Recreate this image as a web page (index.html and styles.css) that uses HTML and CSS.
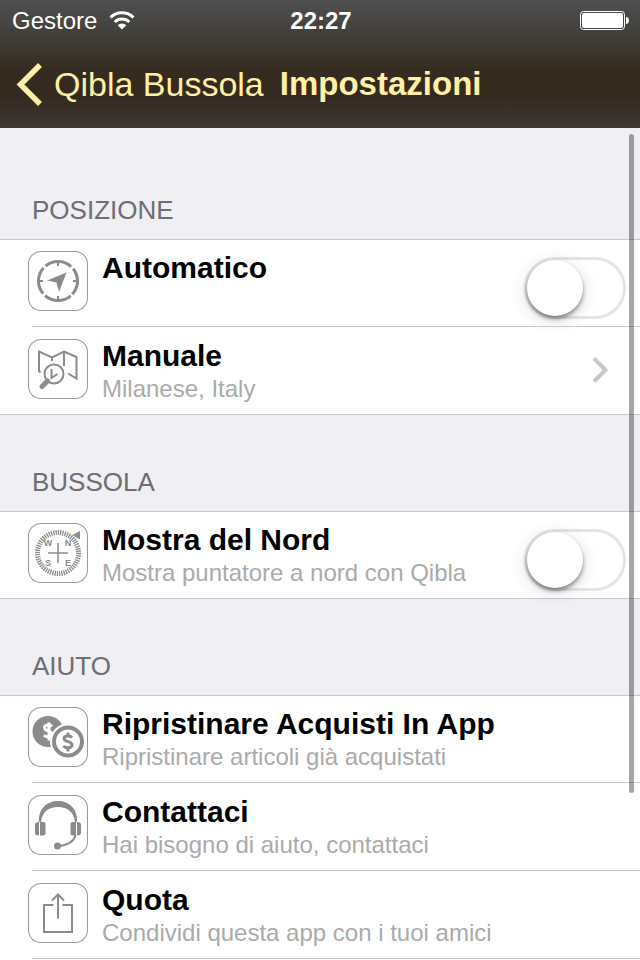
FILE: index.html
```html
<!DOCTYPE html>
<html lang="it">
<head>
    <meta charset="UTF-8">
    <meta name="viewport" content="width=device-width, initial-scale=1.0">
    <title>Impostazioni</title>
    <link rel="stylesheet" href="styles.css">
</head>
<body>
    <header class="header">
        <div class="status">
            <div class="carrier">
                <span>Gestore</span>
                <svg width="26" height="20" viewBox="0 1 26 20" fill="none" stroke="#fff" stroke-width="3">
                    <path d="M1.500 7.500a16.500 16.500 0 0 1 23 0"/>
                    <path d="M5.700 12a10.500 10.500 0 0 1 14.600 0"/>
                    <path d="M13 19.500l-4.300-4.300a6.200 6.200 0 0 1 8.600 0z" fill="#fff" stroke="none"/>
                </svg>
            </div>
            <span class="time">22:27</span>
            <svg class="battery" width="50" height="20" viewBox="0 0 50 20">
                <rect x="0.5" y="0.5" width="44" height="18" rx="3" fill="none" stroke="#fff"/>
                <rect x="2" y="2" width="41" height="15" rx="2" fill="#fff"/>
                <path d="M46 6c4 0 4 7 0 7z" fill="#fff"/>
            </svg>
        </div>
        <nav class="navbar">
            <a class="back" href="#">
                <svg width="28" height="44" viewBox="0 0 28 44" fill="none" stroke="#fff0a5" stroke-width="5.500">
                    <path d="M24 3L4.500 22.500L24 42"/>
                </svg>
                <span>Qibla Bussola</span>
            </a>
            <h1>Impostazioni</h1>
        </nav>
    </header>

    <main class="settings">
        <section class="group">
            <h2>POSIZIONE</h2>
            <ul class="list">
                <li class="row">
                    <svg class="icon" viewBox="0 0 60 60">
                        <g fill="none" stroke="#8b8b8b">
                            <circle cx="30" cy="30" r="19.500" stroke-width="3" stroke-dasharray="27.630 3" stroke-dashoffset="-1.500" transform="rotate(45 30 30)"/>
                            <path d="M30 11v4M30 45v4M11 30h4M45 30h4" stroke-width="2"/>
                        </g>
                        <path d="M38.500 21.500L19 29.500l9.500 2 2.500 9.500z" fill="#8b8b8b"/>
                    </svg>
                    <div class="text">
                        <label class="title" for="automatico">Automatico</label>
                    </div>
                    <input class="switch" type="checkbox" id="automatico">
                </li>
                <li class="row">
                    <svg class="icon" viewBox="0 0 60 60" fill="none" stroke="#8b8b8b" stroke-width="2">
                        <path d="M12.500 33.500L11 32V12.500l13 6L36 12.500l12.500 5.500v21.500L40 34.500M24 18.500V22M36 12.500V27"/>
                        <circle cx="26" cy="35" r="9.500"/>
                        <path d="M23.500 30v9l6-4"/>
                        <path d="M19.500 42L14 47.500" stroke-width="5" stroke-linecap="round"/>
                    </svg>
                    <a class="text" href="#">
                        <span class="title">Manuale</span>
                        <span class="subtitle">Milanese, Italy</span>
                    </a>
                    <svg class="chevron" width="18" height="28" viewBox="0 0 18 28" fill="none" stroke="#c7c7cc" stroke-width="4">
                        <path d="M2 2.500l11.500 11.500L2 25.500"/>
                    </svg>
                </li>
            </ul>
        </section>

        <section class="group">
            <h2>BUSSOLA</h2>
            <ul class="list">
                <li class="row">
                    <svg class="icon" viewBox="0 0 60 60">
                        <g fill="none" stroke="#8b8b8b">
                            <circle cx="30" cy="30" r="20.500" stroke-width="5" stroke-dasharray="1.300 0.980"/>
                            <path d="M30 20v20M20 30h20" stroke-width="1.500"/>
                        </g>
                        <path d="M44.500 12l7.500-4v8.500z" fill="#8b8b8b"/>
                        <g class="compass-letters">
                            <text x="20" y="23">W</text>
                            <text x="40" y="23">N</text>
                            <text x="20" y="43">S</text>
                            <text x="40" y="43">E</text>
                        </g>
                    </svg>
                    <div class="text">
                        <label class="title" for="nord">Mostra del Nord</label>
                        <span class="subtitle">Mostra puntatore a nord con Qibla</span>
                    </div>
                    <input class="switch" type="checkbox" id="nord">
                </li>
            </ul>
        </section>

        <section class="group group-last">
            <h2>AIUTO</h2>
            <ul class="list">
                <li class="row">
                    <svg class="icon" viewBox="0 0 60 60" fill="none">
                        <circle cx="20" cy="24.500" r="15.500" fill="#8b8b8b"/>
                        <path d="M24 19.500c-2-2.500-7.500-2-7.500 1.200 0 4 7.500 2.300 7.500 6.300 0 3.200-5.500 3.800-8 1.200M21 15.500v18" stroke="#fff" stroke-width="3"/>
                        <circle cx="40" cy="34.500" r="18" fill="#fff"/>
                        <circle cx="40" cy="34.500" r="14" stroke="#8b8b8b" stroke-width="4"/>
                        <path d="M44 30.500c-2-2.500-8-2-8 1 0 4 8 2.300 8 6.300 0 3.400-6 4-8.500 1.200M40 25.500v4M40 40v4.500" stroke="#8b8b8b" stroke-width="3"/>
                    </svg>
                    <a class="text" href="#">
                        <span class="title">Ripristinare Acquisti In App</span>
                        <span class="subtitle">Ripristinare articoli già acquistati</span>
                    </a>
                </li>
                <li class="row">
                    <svg class="icon" viewBox="0 0 60 60" fill="#8b8b8b">
                        <path d="M11 27C10 14 19 6 30 6s20 8 19 21h-2C46 17 39 12 30 12s-16 5-17 15z"/>
                        <path d="M11 27v13.500c-3 0-4-1-4-3v-7.500c0-2 1-3 4-3zM12 27h3.500q2 0 2 2v9.500q0 2-2 2H12zM49 27v13.500c3 0 4-1 4-3v-7.500c0-2-1-3-4-3zM48 27h-3.500q-2 0-2 2v9.500q0 2 2 2H48z"/>
                        <path d="M47.500 40C46 46 40 50 31 51" fill="none" stroke="#8b8b8b" stroke-width="2"/>
                        <circle cx="29.500" cy="51" r="3.500"/>
                    </svg>
                    <a class="text" href="#">
                        <span class="title">Contattaci</span>
                        <span class="subtitle">Hai bisogno di aiuto, contattaci</span>
                    </a>
                </li>
                <li class="row">
                    <svg class="icon" viewBox="0 0 60 60" fill="none" stroke="#8b8b8b" stroke-width="2">
                        <path d="M25.500 22H16v27h28V22h-9.500M30 35.500V11.500M24 17.500l6-6 6 6"/>
                    </svg>
                    <a class="text" href="#">
                        <span class="title">Quota</span>
                        <span class="subtitle">Condividi questa app con i tuoi amici</span>
                    </a>
                </li>
            </ul>
        </section>
        <div class="scrollbar"></div>
    </main>
</body>
</html>
```
FILE: styles.css
```css
* {
    box-sizing: border-box;
}
body {
    font-family: "Liberation Sans", Arial, sans-serif;
    background-color: #efeff4;
    color: #000;
    display: flex;
    flex-direction: column;
    min-height: 100vh;
    margin: 0;
}
a {
    color: inherit;
    text-decoration: none;
}
svg {
    flex: none;
}

/* Header */
.header {
    background: linear-gradient(#505050 0%, #3e3a34 35%, #352b20 55%, #33291f 75%, #3e3834 100%);
    padding-bottom: 16px;
}
.status {
    display: grid;
    grid-template-columns: 1fr auto 1fr;
    align-items: center;
    height: 42px;
    padding: 0 10px 0 12px;
    font-size: 24px;
    color: #fff;
}
.carrier {
    display: flex;
    align-items: center;
    gap: 12px;
}
.time {
    font-weight: bold;
}
.battery {
    justify-self: end;
}
.navbar {
    display: flex;
    align-items: center;
    gap: 16px;
    height: 70px;
    padding: 14px 16px 0;
    color: #fff0a5;
}
.back {
    display: flex;
    align-items: center;
    gap: 10px;
    font-size: 34px;
}
h1 {
    margin: 0;
    font-size: 33px;
}

/* Settings */
.settings {
    position: relative;
    display: flex;
    flex-direction: column;
    flex: 1;
}
.group-last {
    display: flex;
    flex-direction: column;
    flex: 1;
}
h2 {
    margin: 0;
    padding: 52px 32px 14px;
    font-size: 26px;
    line-height: 30px;
    font-weight: normal;
    color: #6d6d72;
}
.group:first-child h2 {
    padding-top: 67px;
}
.list {
    flex: 1;
    margin: 0;
    padding: 0;
    list-style: none;
    background-color: #fff;
    border-bottom: 1px solid #c8c7cc;
}
.group-last .list {
    border-bottom: none;
}
.row {
    position: relative;
    display: flex;
    height: 88px;
    padding: 12px 14px 0 28px;
}
.row:first-child {
    border-top: 1px solid #c8c7cc;
    padding-top: 11px;
}
.row:last-child {
    height: 87px;
}
.group-last .row:last-child {
    height: 88px;
}
/* Separator starts after the left inset */
.row:not(:last-child)::after,
.group-last .row::after {
    content: "";
    position: absolute;
    left: 32px;
    right: 0;
    bottom: 0;
    height: 1px;
    background-color: #c8c7cc;
}
.icon {
    width: 60px;
    height: 60px;
    border-radius: 13px;
    box-shadow: inset 0 0 0 1px #999;
}
.compass-letters {
    font-size: 9px;
    font-weight: bold;
    fill: #8b8b8b;
    text-anchor: middle;
}
.text {
    display: flex;
    flex-direction: column;
    flex: 1;
    padding-left: 14px;
}
.title {
    font-size: 30px;
    line-height: 34px;
    font-weight: bold;
}
.subtitle {
    font-size: 24px;
    line-height: 32px;
    color: #aaa;
}
.chevron {
    margin: 17px 16px 0 0;
}
.switch {
    appearance: none;
    flex: none;
    width: 102px;
    height: 62px;
    margin: 6px 0 0;
    border: 3px solid #e5e5e5;
    border-radius: 31px;
    background-color: #fff;
}
.switch::before {
    content: "";
    display: block;
    width: 56px;
    height: 56px;
    border-radius: 50%;
    background-color: #fff;
    box-shadow: 0 3px 4px rgba(0, 0, 0, 0.4), 0 4px 18px rgba(0, 0, 0, 0.15);
}
.switch:checked {
    background-color: #4cd964;
    border-color: #4cd964;
}
.switch:checked::before {
    margin-left: 40px;
}
.scrollbar {
    position: absolute;
    top: 6px;
    right: 6px;
    width: 5px;
    height: 659px;
    border-radius: 3px;
    background-color: rgba(0, 0, 0, 0.35);
}
```
